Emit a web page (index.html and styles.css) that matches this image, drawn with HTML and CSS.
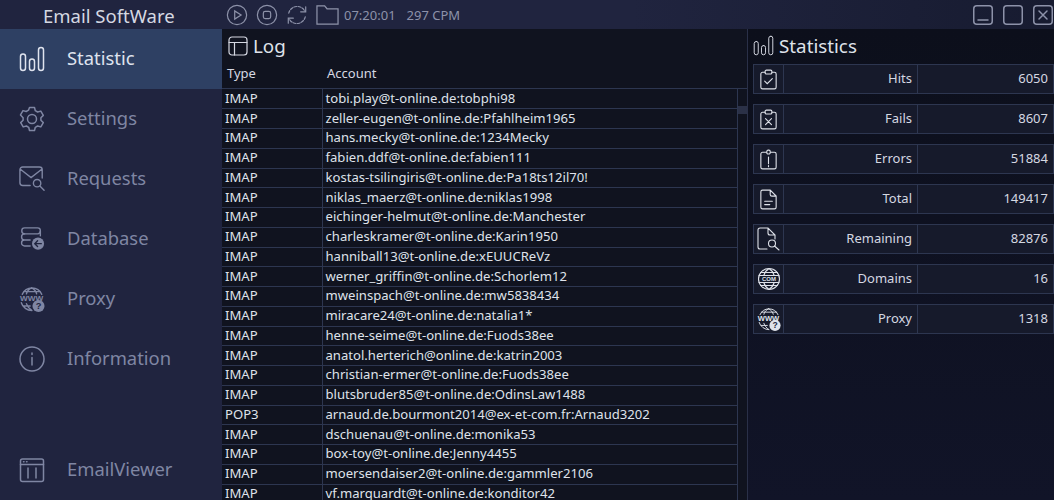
FILE: index.html
```html
<!DOCTYPE html>
<html lang="en">
<head>
<meta charset="utf-8">
<title>Email SoftWare</title>
<link rel="stylesheet" href="styles.css">
</head>
<body>
<svg class="defs" width="0" height="0" aria-hidden="true">
  <defs>
    <symbol id="i-bars" viewBox="0 0 26 26">
      <rect x="1.5" y="8" width="5" height="16.5" rx="2.5"/><rect x="10.5" y="13" width="5" height="11.5" rx="2.5"/><rect x="19.5" y="1.5" width="5" height="23" rx="2.5"/>
    </symbol>
    <symbol id="i-www" viewBox="0 0 28 28">
      <path d="M3.500 9a11.500 11.500 0 0 1 21 0M2.500 18a12 12 0 0 0 11.500 8.500M13.500 2c-3 1.500-5 4-5.500 6.500M13.500 2c3 1.500 5 4 5.500 6.500M8 19c1 3 3 5.500 5.500 7M5 6h18M5 21.500h7"/>
      <text class="icon-text" x="13.500" y="16.500" text-anchor="middle" textLength="25" lengthAdjust="spacingAndGlyphs">WWW</text>
      <circle class="fill" cx="21" cy="21.500" r="6.500"/>
      <text class="icon-mark" x="21" y="25" text-anchor="middle">?</text>
    </symbol>
  </defs>
</svg>
<div class="app">
  <header class="topbar">
    <div class="brand">Email SoftWare</div>
    <div class="tools">
      <svg class="tool" viewBox="0 0 24 24"><circle cx="12" cy="12" r="10.500"/><path d="M9.500 7.500v9l7-4.500z"/></svg>
      <svg class="tool" viewBox="0 0 24 24"><circle cx="12" cy="12" r="10.500"/><rect x="8" y="8" width="8" height="8" rx="2"/></svg>
      <svg class="tool" viewBox="0 0 24 24"><path stroke-dasharray="3 1.500" d="M3 10a9.500 9.500 0 0 1 16-4.500L21 8M21 14a9.500 9.500 0 0 1-16 4.500L3 16"/><path d="M21.500 3v5.500H16M2.500 21v-5.500H8"/></svg>
      <svg class="tool folder" viewBox="0 0 24 22"><path d="M1 20.500V1.500h8l2.500 3H23v16z"/></svg>
      <span class="clock">07:20:01</span>
      <span class="cpm">297 CPM</span>
    </div>
    <div class="winbtns">
      <svg class="win" viewBox="0 0 20 20"><rect x=".75" y=".75" width="18.500" height="18.500" rx="3"/><path d="M5 15h10"/></svg>
      <svg class="win" viewBox="0 0 20 20"><rect x=".75" y=".75" width="18.500" height="18.500" rx="3"/></svg>
      <svg class="win" viewBox="0 0 20 20"><rect x=".75" y=".75" width="18.500" height="18.500" rx="3"/><path d="M6 6l8 8M14 6l-8 8"/></svg>
    </div>
  </header>
  <div class="main">
    <nav class="side">
      <a class="nav active"><svg class="nav-ic"><use href="#i-bars"/></svg><span>Statistic</span></a>
      <a class="nav"><svg class="nav-ic" viewBox="0 0 26 26"><path d="M10.500 1.500h5l.8 3.200 2.300 1.300 3.200-.9 2.500 4.300-2.400 2.300v2.600l2.400 2.300-2.500 4.300-3.200-.9-2.300 1.300-.8 3.200h-5l-.8-3.200-2.300-1.300-3.200.9-2.500-4.300 2.400-2.300v-2.600L1.500 8.900 4 4.600l3.200.9 2.300-1.300z" stroke-linejoin="round"/><circle cx="13" cy="13" r="4.500"/></svg><span>Settings</span></a>
      <a class="nav"><svg class="nav-ic" viewBox="0 0 28 28"><path d="M12 21H4a3 3 0 0 1-3-3V4a3 3 0 0 1 3-3h18a3 3 0 0 1 3 3v9M1.500 3.500L13 12.500l11.500-9"/><circle cx="19.500" cy="18.500" r="4"/><path d="M22.500 21.500l4.500 4.500"/></svg><span>Requests</span></a>
      <a class="nav"><svg class="nav-ic" viewBox="0 0 28 28"><rect x="3" y="2" width="20" height="6.500" rx="3"/><path d="M12 15H6a3 3 0 0 1 0-6.500M12 15H6a3 3 0 0 0 0 6.500h6M23 5.500v5"/><circle class="fill" cx="20.500" cy="19" r="6.500"/><path class="cut" d="M24 19h-6.500M20 16l-3 3 3 3"/></svg><span>Database</span></a>
      <a class="nav"><svg class="nav-ic"><use href="#i-www"/></svg><span>Proxy</span></a>
      <a class="nav"><svg class="nav-ic" viewBox="0 0 26 26"><circle cx="13" cy="13" r="12"/><path d="M13 11.500V19M13 7v1.500"/></svg><span>Information</span></a>
      <a class="nav bottom"><svg class="nav-ic" viewBox="0 0 26 26"><rect x="1.500" y="2" width="23" height="22.500" rx="2"/><path d="M1.500 7.500h23M9 11v10M17 11v10M4.500 4.800h.5M7.500 4.800h.5"/></svg><span>EmailViewer</span></a>
    </nav>
    <section class="log">
      <h2 class="heading"><svg class="head-ic" viewBox="0 0 20 20"><rect x="1" y="1" width="18" height="18" rx="3"/><path d="M1 6.500h18M6.500 6.500V19"/></svg>Log</h2>
      <div class="cols"><span class="col-type">Type</span><span>Account</span></div>
      <div class="grid-wrap">
        <table class="grid">
          <tbody>
            <tr><td>IMAP</td><td>tobi.play@t-online.de:tobphi98</td></tr>
            <tr><td>IMAP</td><td>zeller-eugen@t-online.de:Pfahlheim1965</td></tr>
            <tr><td>IMAP</td><td>hans.mecky@t-online.de:1234Mecky</td></tr>
            <tr><td>IMAP</td><td>fabien.ddf@t-online.de:fabien111</td></tr>
            <tr><td>IMAP</td><td>kostas-tsilingiris@t-online.de:Pa18ts12il70!</td></tr>
            <tr><td>IMAP</td><td>niklas_maerz@t-online.de:niklas1998</td></tr>
            <tr><td>IMAP</td><td>eichinger-helmut@t-online.de:Manchester</td></tr>
            <tr><td>IMAP</td><td>charleskramer@t-online.de:Karin1950</td></tr>
            <tr><td>IMAP</td><td>hanniball13@t-online.de:xEUUCReVz</td></tr>
            <tr><td>IMAP</td><td>werner_griffin@t-online.de:Schorlem12</td></tr>
            <tr><td>IMAP</td><td>mweinspach@t-online.de:mw5838434</td></tr>
            <tr><td>IMAP</td><td>miracare24@t-online.de:natalia1*</td></tr>
            <tr><td>IMAP</td><td>henne-seime@t-online.de:Fuods38ee</td></tr>
            <tr><td>IMAP</td><td>anatol.herterich@online.de:katrin2003</td></tr>
            <tr><td>IMAP</td><td>christian-ermer@t-online.de:Fuods38ee</td></tr>
            <tr><td>IMAP</td><td>blutsbruder85@t-online.de:OdinsLaw1488</td></tr>
            <tr><td>POP3</td><td>arnaud.de.bourmont2014@ex-et-com.fr:Arnaud3202</td></tr>
            <tr><td>IMAP</td><td>dschuenau@t-online.de:monika53</td></tr>
            <tr><td>IMAP</td><td>box-toy@t-online.de:Jenny4455</td></tr>
            <tr><td>IMAP</td><td>moersendaiser2@t-online.de:gammler2106</td></tr>
            <tr><td>IMAP</td><td>vf.marquardt@t-online.de:konditor42</td></tr>
          </tbody>
        </table>
        <div class="scroll"><div class="thumb"></div></div>
      </div>
    </section>
    <aside class="stats">
      <h2 class="heading"><svg class="head-ic bars"><use href="#i-bars"/></svg>Statistics</h2>
      <ul class="stat-list">
        <li class="stat"><span class="s-ic"><svg viewBox="0 0 20 24"><path d="M6 3.500H3a2 2 0 0 0-2 2V21a2 2 0 0 0 2 2h14a2 2 0 0 0 2-2V5.500a2 2 0 0 0-2-2h-3"/><rect x="6" y="1" width="8" height="4.500" rx="1.500"/><path d="M5.500 14l3 3 6-6"/></svg></span><span class="s-label">Hits</span><span class="s-val">6050</span></li>
        <li class="stat"><span class="s-ic"><svg viewBox="0 0 20 24"><path d="M6 3.500H3a2 2 0 0 0-2 2V21a2 2 0 0 0 2 2h14a2 2 0 0 0 2-2V5.500a2 2 0 0 0-2-2h-3"/><rect x="6" y="1" width="8" height="4.500" rx="1.500"/><path d="M6.500 11l7 7M13.500 11l-7 7"/></svg></span><span class="s-label">Fails</span><span class="s-val">8607</span></li>
        <li class="stat"><span class="s-ic"><svg viewBox="0 0 20 24"><path d="M7.500 3.500H3a2 2 0 0 0-2 2V21a2 2 0 0 0 2 2h14a2 2 0 0 0 2-2V5.500a2 2 0 0 0-2-2h-4.500"/><rect x="8" y="1" width="4" height="4.500" rx="1.500"/><path d="M10 9v8M10 19v1.500"/></svg></span><span class="s-label">Errors</span><span class="s-val">51884</span></li>
        <li class="stat"><span class="s-ic"><svg viewBox="0 0 20 24"><path d="M12 1H3a2 2 0 0 0-2 2v18a2 2 0 0 0 2 2h14a2 2 0 0 0 2-2V8zM12 1v5a2 2 0 0 0 2 2h5M5.500 14h9M5.500 18h6"/></svg></span><span class="s-label">Total</span><span class="s-val">149417</span></li>
        <li class="stat"><span class="s-ic"><svg class="big" viewBox="0 0 24 24"><path d="M10 22H3a2 2 0 0 1-2-2V3a2 2 0 0 1 2-2h8l7 7v4M11 1v5a2 2 0 0 0 2 2h5"/><circle cx="15" cy="16.500" r="3.500"/><path d="M17.500 19l4.500 4"/></svg></span><span class="s-label">Remaining</span><span class="s-val">82876</span></li>
        <li class="stat"><span class="s-ic"><svg class="big" viewBox="0 0 24 24"><circle cx="12" cy="12" r="10.500"/><path d="M12 1.500c-3 2-4.500 4.500-5 6.500M12 1.500c3 2 4.500 4.500 5 6.500M12 22.500c-3-2-4.500-4.500-5-6.500M12 22.500c3-2 4.500-4.500 5-6.500M3.500 5.500h17M3.500 18.500h17M2 8.500h20M2 15.500h20"/><text class="icon-text com" x="12" y="14" text-anchor="middle" textLength="14" lengthAdjust="spacingAndGlyphs">COM</text></svg></span><span class="s-label">Domains</span><span class="s-val">16</span></li>
        <li class="stat"><span class="s-ic"><svg class="big www"><use href="#i-www"/></svg></span><span class="s-label">Proxy</span><span class="s-val">1318</span></li>
      </ul>
    </aside>
  </div>
</div>
</body>
</html>
```
FILE: styles.css
```css
* { box-sizing: border-box; }
html, body { margin: 0; height: 100%; }
body {
  width: 1054px;
  height: 500px;
  overflow: hidden;
  background: #0b0e1a;
  color: #e3e5ec;
  font-family: "Noto Sans", "Open Sans", sans-serif;
}
.defs { position: absolute; }
svg { fill: none; stroke: currentColor; stroke-width: 1.500; stroke-linecap: round; }
svg .fill { fill: currentColor; stroke: none; }
svg .cut { stroke: #20253f; stroke-width: 1.500; }
.icon-text { fill: currentColor; stroke: none; font-family: "Liberation Sans", sans-serif; font-size: 8px; font-weight: 700; }
.icon-text.com { font-size: 5.500px; }
.icon-mark { fill: #20243f; stroke: none; font-family: "Liberation Sans", sans-serif; font-size: 10px; font-weight: 700; }
.stat .icon-mark { fill: #161a2b; }
.app { display: flex; flex-direction: column; height: 500px; }
.topbar {
  flex: 0 0 29px;
  display: flex;
  align-items: center;
  background: linear-gradient(90deg, #20243f 0%, #20243f 60%, #171b30 100%);
}
.brand { flex: 0 0 222px; padding: 2px 0 0 43px; font-size: 18.500px; line-height: 24px; color: #d5d8e2; }
.tools { flex: 1; display: flex; align-items: center; color: #8d92a9; padding-left: 4px; }
.tool { width: 22px; height: 22px; margin-right: 8px; stroke-width: 1.300; }
.folder { width: 23px; margin-right: 5px; }
.clock { font-size: 13px; margin-right: 11px; }
.cpm { font-size: 13px; }
.winbtns { display: flex; gap: 10px; padding-right: 1px; color: #8d92a9; }
.win { width: 20px; height: 20px; }
.main { flex: 1; display: flex; min-height: 0; }
.side {
  flex: 0 0 222px;
  display: flex;
  flex-direction: column;
  background: #20243f;
  color: #7f86a3;
}
.nav { flex: 0 0 60px; display: flex; align-items: center; padding-left: 19px; font-size: 18.400px; }
.nav span { margin-left: 22px; padding-bottom: 4px; }
.nav-ic { width: 26px; height: 26px; }
.nav.active { background: #2e4063; color: #dfe3ee; }
.nav.bottom { margin-top: auto; }
.log { flex: 0 0 526px; display: flex; flex-direction: column; border-right: 1px solid #2a3048; background: #10131f; min-width: 0; overflow: hidden; }
.heading { margin: 0; display: flex; align-items: center; font-weight: 400; font-size: 18.800px; height: 32px; color: #dfe2ea; }
.log .heading { padding: 2px 0 0 6px; }
.head-ic { width: 20px; height: 20px; margin-right: 5px; stroke-width: 1.200; color: #d5d8e2; }
.head-ic.bars { width: 21px; height: 21px; margin-right: 5px; }
.cols { height: 27px; display: flex; align-items: center; font-size: 13px; color: #d5d8e2; padding: 0 0 4px 5px; }
.col-type { flex: 0 0 100px; }
.grid-wrap { flex: 1; display: flex; min-height: 0; border-top: 1px solid #2d3650; overflow: hidden; }
.grid { flex: 0 0 516px; width: 516px; height: max-content; border-collapse: collapse; table-layout: fixed; font-size: 13.100px; color: #dfe2ea; }
.grid td { height: 19.750px; padding: 0 3px 2px; border-bottom: 1px solid #2d3650; white-space: nowrap; line-height: 16px; }
.grid td:first-child { width: 100px; border-right: 1px solid #2d3650; }
.grid td:last-child { border-right: 1px solid #2d3650; }
.scroll { flex: 1; background: #10131f; padding-top: 17px; }
.thumb { height: 8px; background: #2b3147; }
.stats { flex: 1; background: linear-gradient(180deg, #0c0f1b, #111428); min-width: 0; }
.stats .heading { padding: 0 0 2px 5px; height: 35px; }
.stat-list { list-style: none; margin: 0; padding: 0 0 0 5px; display: flex; flex-direction: column; gap: 10px; }
.stat { height: 30px; display: flex; align-items: stretch; background: #161a2b; border: 1px solid #2d3650; font-size: 13px; color: #d5d8e2; }
.s-ic { flex: 0 0 30px; display: flex; align-items: center; justify-content: center; border-right: 1px solid #2d3650; }
.s-ic svg { width: 17px; height: 21px; stroke-width: 1.300; color: #dfe2ea; }
.s-ic svg.big { width: 24px; height: 24px; stroke-width: 1.100; }
.s-label, .s-val { display: flex; align-items: center; justify-content: flex-end; padding: 0 5px 2px 0; }
.s-label { flex: 0 0 134px; border-right: 1px solid #2d3650; }
.s-val { flex: 1; }
```
